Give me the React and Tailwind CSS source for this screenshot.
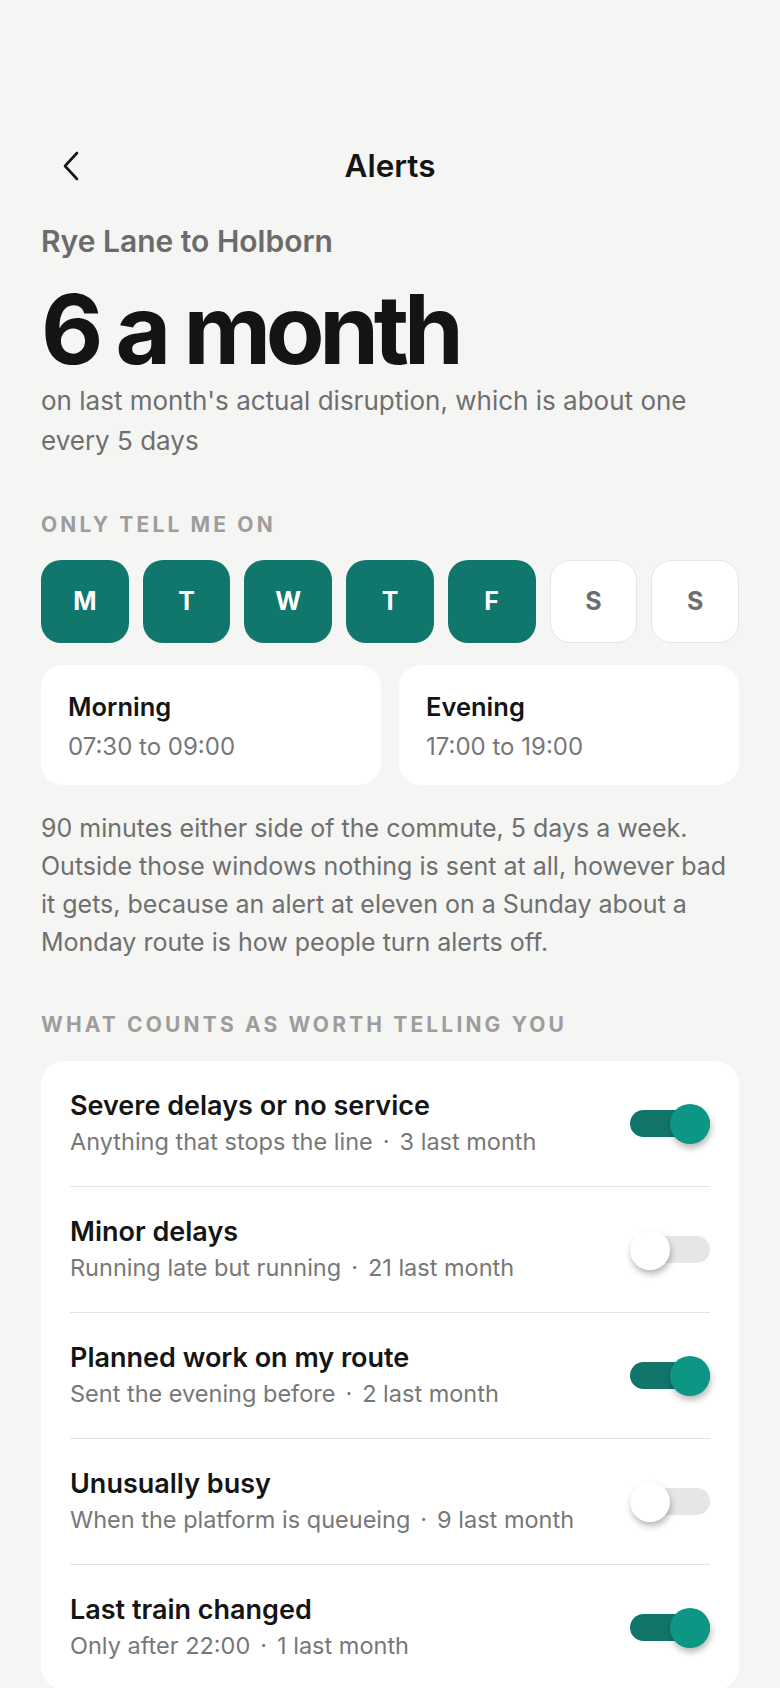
import React, { useState } from "react";

const DAYS = [
  { key: "mon", label: "M", on: true },
  { key: "tue", label: "T", on: true },
  { key: "wed", label: "W", on: true },
  { key: "thu", label: "T", on: true },
  { key: "fri", label: "F", on: true },
  { key: "sat", label: "S", on: false },
  { key: "sun", label: "S", on: false },
];

const WINDOWS = [
  { name: "Morning", range: "07:30 to 09:00" },
  { name: "Evening", range: "17:00 to 19:00" },
];

const RULES = [
  { title: "Severe delays or no service", note: "Anything that stops the line", count: "3 last month", on: true },
  { title: "Minor delays", note: "Running late but running", count: "21 last month", on: false },
  { title: "Planned work on my route", note: "Sent the evening before", count: "2 last month", on: true },
  { title: "Unusually busy", note: "When the platform is queueing", count: "9 last month", on: false },
  { title: "Last train changed", note: "Only after 22:00", count: "1 last month", on: true },
];

const Toggle = ({ on, onClick }) => (
  <button
    type="button"
    onClick={onClick}
    className="relative w-[80px] h-[40px] shrink-0 flex items-center"
  >
    <span
      className={
        "block w-full h-[27px] rounded-full " + (on ? "bg-[#12756a]" : "bg-[#e6e6e6]")
      }
    />
    <span
      className={
        "absolute top-0 w-[40px] h-[40px] rounded-full shadow-[1px_4px_6px_rgba(0,0,0,0.28)] " +
        (on ? "right-0 bg-[#0d9684]" : "left-0 bg-white")
      }
    />
  </button>
);

export default function App() {
  const [days, setDays] = useState(DAYS);
  const [rules, setRules] = useState(RULES);

  const toggleDay = (key) =>
    setDays((prev) => prev.map((d) => (d.key === key ? { ...d, on: !d.on } : d)));

  const toggleRule = (i) =>
    setRules((prev) => prev.map((r, idx) => (idx === i ? { ...r, on: !r.on } : r)));

  return (
    <div className="min-h-screen bg-[#f5f5f3] font-['Inter',sans-serif] text-[#151515] px-[41px] pt-[138px] pb-10">
      {/* header */}
      <div className="relative h-[56px] flex items-center justify-center">
        <button type="button" className="absolute left-[18px] top-[12px] text-[#151515]">
          <svg width="24" height="32" viewBox="0 0 24 32" fill="none">
            <path
              d="M18 3 L6 16 L18 29"
              stroke="currentColor"
              strokeWidth="2.6"
              strokeLinecap="round"
              strokeLinejoin="round"
            />
          </svg>
        </button>
        <h1 className="text-[31.5px] font-semibold leading-none">Alerts</h1>
      </div>

      <p className="mt-[29px] text-[30px] leading-[36px] font-semibold text-[#6b6b6b]">
        Rye Lane to Holborn
      </p>
      <h2 className="mt-[22px] text-[96px] leading-[96px] font-bold tracking-[-0.055em] text-[#141414]">
        6 a month
      </h2>
      <p className="mt-[4px] text-[26px] leading-[40px] text-[#6f6f6f]">
        on last month's actual disruption, which is about one every 5 days
      </p>

      <p className="mt-[50px] text-[21px] leading-[28px] font-bold tracking-[0.15em] text-[#9d9d9d]">
        ONLY TELL ME ON
      </p>
      <div className="mt-[21px] grid grid-cols-7 gap-[14px]">
        {days.map((d) => (
          <button
            key={d.key}
            type="button"
            onClick={() => toggleDay(d.key)}
            className={
              "h-[83px] rounded-[20px] flex items-center justify-center text-[25px] font-bold " +
              (d.on
                ? "bg-[#11766b] text-white"
                : "bg-white border-[1.5px] border-[#e6e6e4] text-[#6e6e6e]")
            }
          >
            {d.label}
          </button>
        ))}
      </div>

      <div className="mt-[22px] grid grid-cols-2 gap-[18px]">
        {WINDOWS.map((w) => (
          <div key={w.name} className="bg-white rounded-[22px] px-[27px] pt-[25px] pb-[21px]">
            <p className="text-[25.5px] leading-[34px] font-semibold">{w.name}</p>
            <p className="mt-[6px] text-[24px] leading-[34px] text-[#777]">{w.range}</p>
          </div>
        ))}
      </div>

      <p className="mt-[24px] text-[25px] leading-[38px] text-[#6f6f6f]">
        90 minutes either side of the commute, 5 days a week. Outside those windows nothing is
        sent at all, however bad it gets, because an alert at eleven on a Sunday about a Monday
        route is how people turn alerts off.
      </p>

      <p className="mt-[50px] text-[21px] leading-[28px] font-bold tracking-[0.15em] text-[#9d9d9d]">
        WHAT COUNTS AS WORTH TELLING YOU
      </p>

      <div className="mt-[22px] bg-white rounded-[24px] px-[29px]">
        {rules.map((r, i) => (
          <div
            key={r.title}
            className={
              "flex items-center justify-between py-[26.5px] " +
              (i < rules.length - 1 ? "border-b border-[#e4e4e2]" : "")
            }
          >
            <div>
              <p className="text-[27px] leading-[36px] font-semibold">{r.title}</p>
              <p className="text-[23.5px] leading-[36px] text-[#777]">
                {r.note}
                <span className="mx-[10px]">·</span>
                {r.count}
              </p>
            </div>
            <Toggle on={r.on} onClick={() => toggleRule(i)} />
          </div>
        ))}
      </div>
    </div>
  );
}
